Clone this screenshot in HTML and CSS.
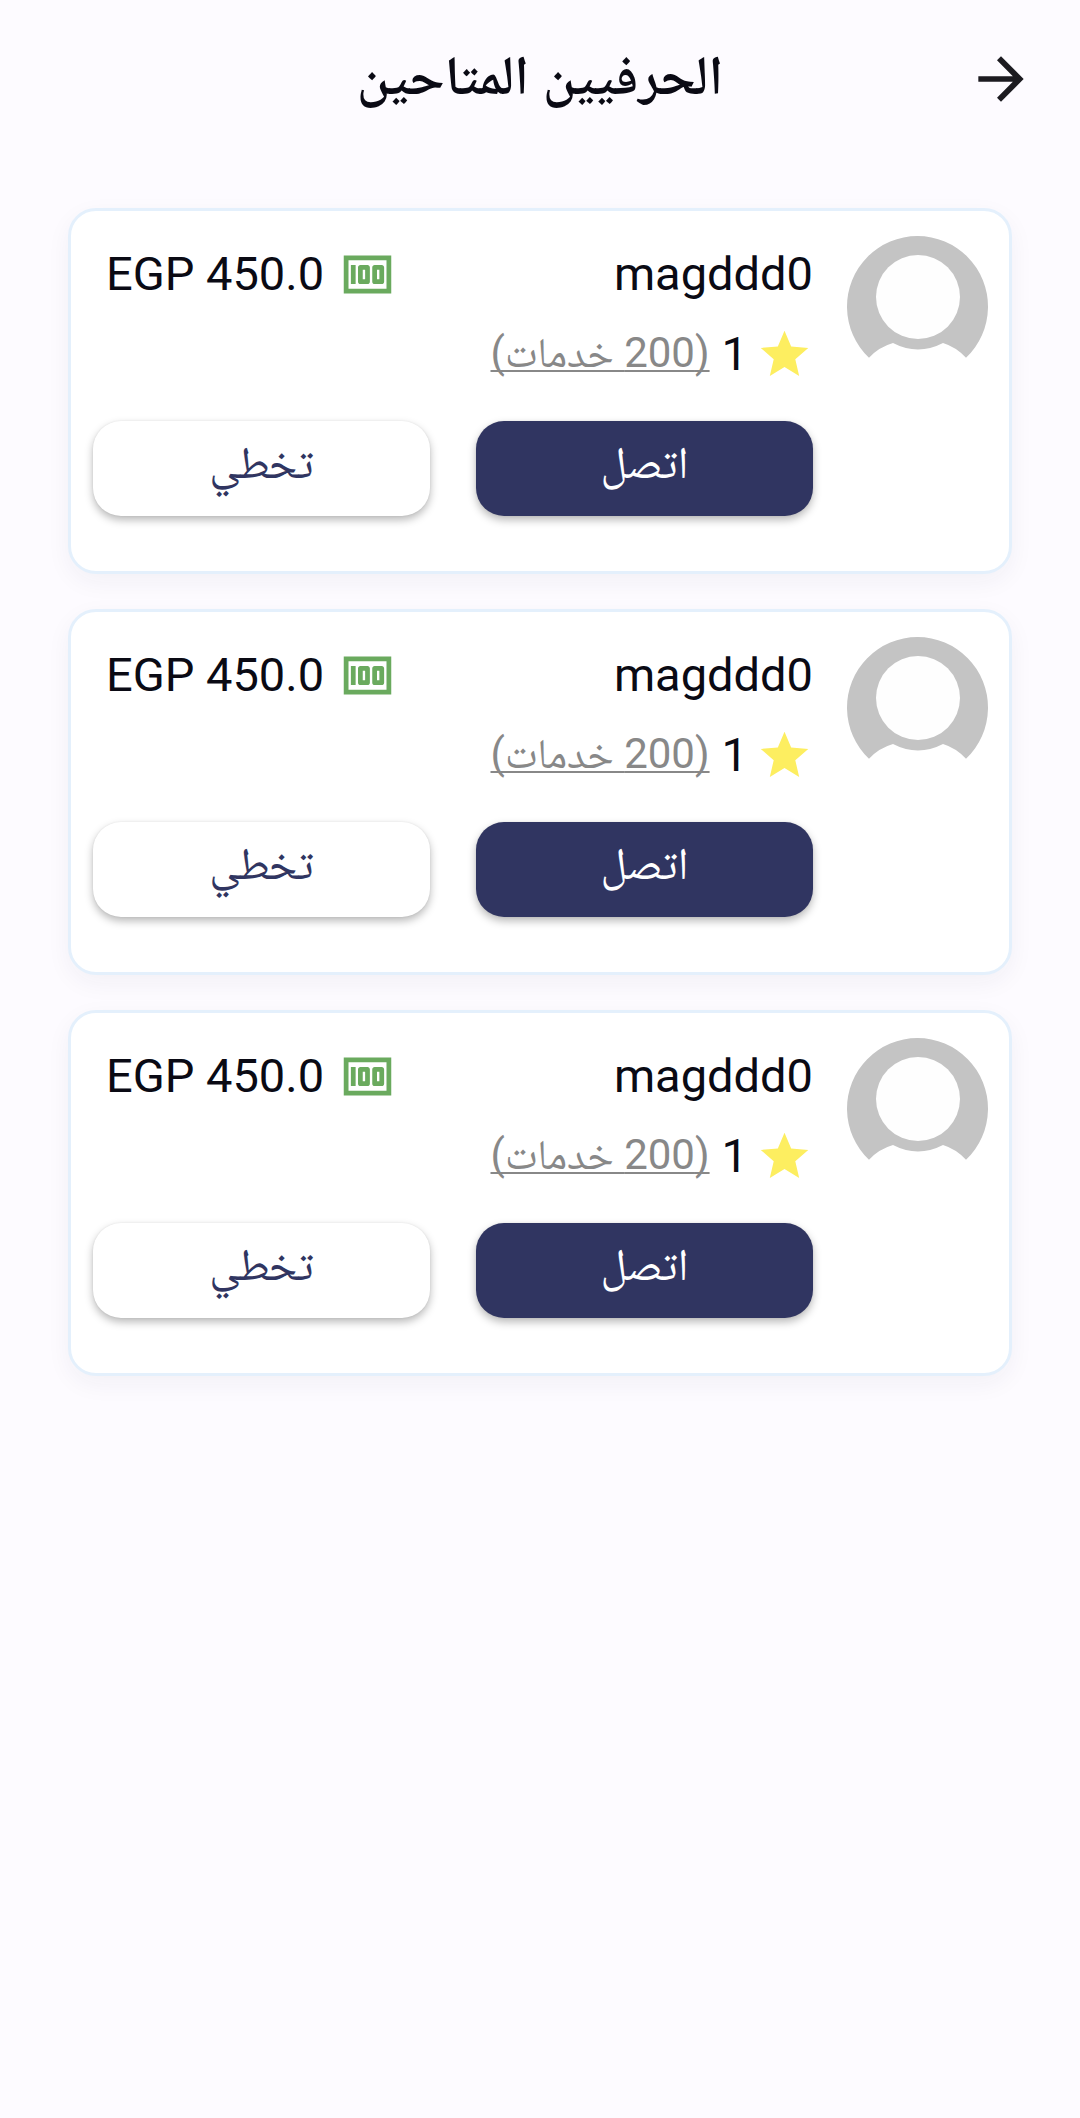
FILE: index.html
```html
<!DOCTYPE html>
<html lang="ar" dir="rtl">
<head>
<meta charset="utf-8">
<meta name="viewport" content="width=device-width, initial-scale=1">
<title>الحرفيين المتاحين</title>
<link rel="stylesheet" href="styles.css">
</head>
<body>
<svg class="defs" aria-hidden="true">
  <symbol id="money" viewBox="0 0 24 24"><path d="M15 16h3c.55 0 1-.45 1-1V9c0-.55-.45-1-1-1h-3c-.55 0-1 .45-1 1v6c0 .55.45 1 1 1zm1-6h1v4h-1v-4zM9 16h3c.55 0 1-.45 1-1V9c0-.55-.45-1-1-1H9c-.55 0-1 .45-1 1v6c0 .55.45 1 1 1zm1-6h1v4h-1v-4zM5 8h2v8H5zM2 4v16h20V4H2zm2 14V6h16v12H4z" fill-rule="evenodd"/></symbol>
  <symbol id="star" viewBox="0 0 24 24"><path d="M12 17.27 18.18 21l-1.64-7.03L22 9.24l-7.19-.61L12 2 9.19 8.63 2 9.24l5.46 4.73L5.82 21z"/></symbol>
  <symbol id="person" viewBox="0 0 141 141"><path d="M22 121.700A70.500 70.500 0 1 1 119 121.700Q109 111 96 107Q71 120 46 107Q32 111 22 121.700Z" fill="#c4c4c4"/><circle cx="71" cy="61" r="42" fill="#fefefe"/></symbol>
</svg>
<header class="app-bar">
  <button class="back" type="button" aria-label="رجوع">
    <svg class="back-icon" viewBox="0 0 24 24" aria-hidden="true"><path d="M12 4l-1.410 1.410L16.170 11H4v2h12.170l-5.580 5.590L12 20l8-8z"/></svg>
  </button>
  <h1 class="title">الحرفيين المتاحين</h1>
</header>
<main class="list">
  <article class="card">
    <svg class="avatar" aria-hidden="true"><use href="#person"/></svg>
    <div class="details">
      <div class="row">
        <h2 class="name">magddd0</h2>
        <div class="price"><svg class="icon money" aria-hidden="true"><use href="#money"/></svg><span dir="ltr">EGP 450.0</span></div>
      </div>
      <div class="rating"><svg class="icon star" aria-hidden="true"><use href="#star"/></svg><span class="score">1</span><a class="services" href="#">(200 خدمات)</a></div>
      <div class="actions"><button class="button call" type="button">اتصل</button><button class="button skip" type="button">تخطي</button></div>
    </div>
  </article>
  <article class="card">
    <svg class="avatar" aria-hidden="true"><use href="#person"/></svg>
    <div class="details">
      <div class="row">
        <h2 class="name">magddd0</h2>
        <div class="price"><svg class="icon money" aria-hidden="true"><use href="#money"/></svg><span dir="ltr">EGP 450.0</span></div>
      </div>
      <div class="rating"><svg class="icon star" aria-hidden="true"><use href="#star"/></svg><span class="score">1</span><a class="services" href="#">(200 خدمات)</a></div>
      <div class="actions"><button class="button call" type="button">اتصل</button><button class="button skip" type="button">تخطي</button></div>
    </div>
  </article>
  <article class="card">
    <svg class="avatar" aria-hidden="true"><use href="#person"/></svg>
    <div class="details">
      <div class="row">
        <h2 class="name">magddd0</h2>
        <div class="price"><svg class="icon money" aria-hidden="true"><use href="#money"/></svg><span dir="ltr">EGP 450.0</span></div>
      </div>
      <div class="rating"><svg class="icon star" aria-hidden="true"><use href="#star"/></svg><span class="score">1</span><a class="services" href="#">(200 خدمات)</a></div>
      <div class="actions"><button class="button call" type="button">اتصل</button><button class="button skip" type="button">تخطي</button></div>
    </div>
  </article>
</main>
</body>
</html>
```
FILE: styles.css
```css
* { box-sizing: border-box; }
body {
  margin: 0;
  min-height: 100vh;
  background: #fdfbff;
  color: #0a0a14;
  font-family: Roboto, "Noto Naskh Arabic", "Noto Sans Arabic", "DejaVu Sans", sans-serif;
}
.defs { display: none; }
.app-bar {
  display: grid;
  grid-template-columns: 68px 1fr 68px;
  align-items: center;
  height: 158px;
  padding: 0 45px;
}
.back { padding: 0; border: 0; background: none; line-height: 0; }
.back-icon { width: 68px; height: 68px; fill: #1c1b20; }
.title { margin: 0; padding-bottom: 8px; text-align: center; font-size: 55px; line-height: 64px; font-weight: 600; }
.list { display: flex; flex-direction: column; gap: 35px; padding: 50px 68px; }
.card {
  display: flex;
  align-items: flex-start;
  gap: 34px;
  padding: 25px 21px 55px 22px;
  border: 3px solid #e4f0fc;
  border-radius: 28px;
  background: #fff;
  box-shadow: 0 8px 24px rgba(40, 40, 80, 0.05);
}
.avatar { flex: none; width: 141px; height: 141px; }
.details { flex: 1; min-width: 0; }
.row { display: flex; justify-content: space-between; align-items: center; height: 76px; }
.name { margin: 0; font-size: 47px; line-height: 60px; font-weight: 400; }
.price { display: flex; align-items: center; gap: 15px; padding-left: 13px; font-size: 47px; line-height: 60px; }
.icon { flex: none; width: 57px; height: 57px; }
.money { fill: #6aaa5e; }
.star { fill: #fdee60; }
.rating { display: flex; align-items: center; height: 84px; }
.score { margin: 0 8px 0 12px; font-size: 47px; line-height: 60px; }
.services { padding-bottom: 2px; color: #888; font-size: 42px; line-height: 60px; text-underline-offset: 3px; text-decoration-thickness: 2px; text-decoration-skip-ink: none; }
.actions { display: flex; gap: 46px; margin-top: 25px; }
.button {
  flex: 1;
  height: 95px;
  padding: 0 0 12px;
  border: 0;
  border-radius: 28px;
  box-shadow: 0 4px 8px rgba(0, 0, 0, 0.28), 0 0 2px rgba(0, 0, 0, 0.08);
  font-family: inherit;
  font-size: 45px;
  line-height: 60px;
}
.call { background: #303561; color: #fff; }
.skip { background: #fff; color: #303561; }
```
